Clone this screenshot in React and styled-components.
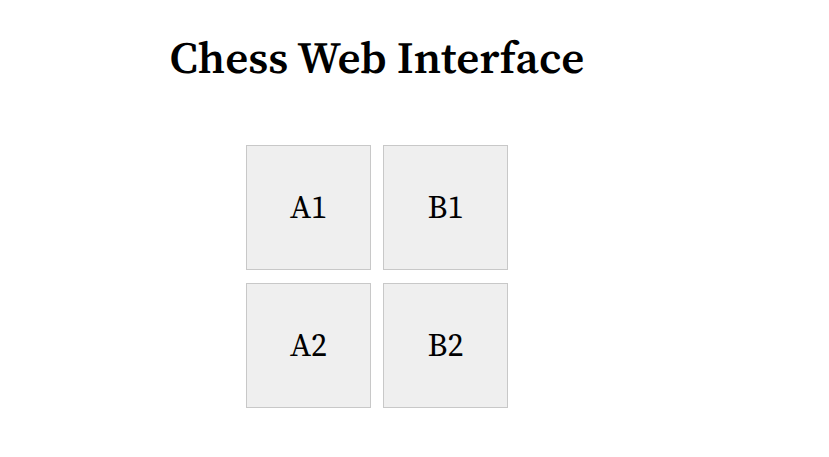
import React from "react";
import styled, { createGlobalStyle } from "styled-components";

const Global = createGlobalStyle`
  body { margin: 8px; background: #fff; font-family: "Source Serif 4", "Noto Serif", serif; }
`;

const Page = styled.div`
  width: 738px;
  display: flex;
  flex-direction: column;
  align-items: center;
`;

const Title = styled.h1`
  font-size: 45px;
  font-weight: 600;
  margin: 17.5px 0 0;
  color: #000;
`;

const Board = styled.div`
  display: grid;
  grid-template-columns: repeat(2, 125px);
  column-gap: 12px;
  row-gap: 13px;
  margin-top: 57px;
`;

const Cell = styled.div`
  box-sizing: border-box;
  width: 125px;
  height: 125px;
  background: #efefef;
  border: 1px solid #c8c8c8;
  display: flex;
  align-items: center;
  justify-content: center;
  font-size: 32px;
  color: #000;
`;

const cells = ["A1", "B1", "A2", "B2"];

export default function App() {
  return (
    <>
      <Global />
      <Page>
        <Title>Chess Web Interface</Title>
        <Board>
          {cells.map((c) => (
            <Cell key={c}>{c}</Cell>
          ))}
        </Board>
      </Page>
    </>
  );
}
